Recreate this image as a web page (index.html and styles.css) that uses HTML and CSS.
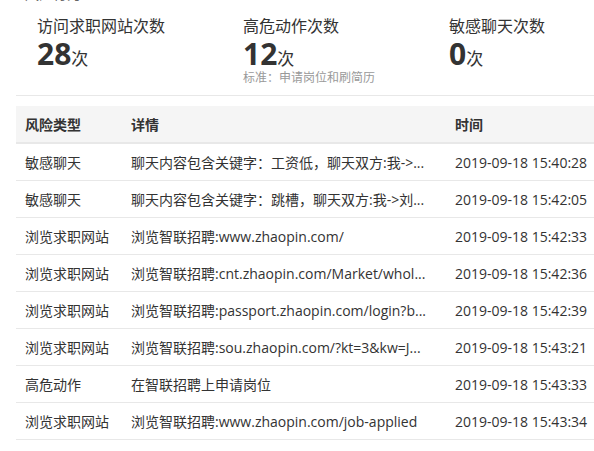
FILE: index.html
```html
<!DOCTYPE html>
<html lang="zh-CN">
<head>
<meta charset="utf-8">
<title>风险行为</title>
<link rel="stylesheet" href="styles.css">
</head>
<body>
<div class="page">
  <h2 class="section-title">风险行为</h2>
  <div class="stats">
    <div class="stat">
      <div class="stat-label">访问求职网站次数</div>
      <div class="stat-value"><span class="num">28</span><span class="unit">次</span></div>
    </div>
    <div class="stat">
      <div class="stat-label">高危动作次数</div>
      <div class="stat-value"><span class="num">12</span><span class="unit">次</span></div>
      <div class="stat-note">标准：申请岗位和刷简历</div>
    </div>
    <div class="stat stat-last">
      <div class="stat-label">敏感聊天次数</div>
      <div class="stat-value"><span class="num">0</span><span class="unit">次</span></div>
    </div>
  </div>
  <table class="risk-table">
    <colgroup>
      <col class="c-type">
      <col class="c-detail">
      <col class="c-time">
    </colgroup>
    <thead>
      <tr><th>风险类型</th><th>详情</th><th>时间</th></tr>
    </thead>
    <tbody>
      <tr><td>敏感聊天</td><td>聊天内容包含关键字：工资低，聊天双方:我-&gt;...</td><td>2019-09-18 15:40:28</td></tr>
      <tr><td>敏感聊天</td><td>聊天内容包含关键字：跳槽，聊天双方:我-&gt;刘...</td><td>2019-09-18 15:42:05</td></tr>
      <tr><td>浏览求职网站</td><td>浏览智联招聘:www.zhaopin.com/</td><td>2019-09-18 15:42:33</td></tr>
      <tr><td>浏览求职网站</td><td>浏览智联招聘:cnt.zhaopin.com/Market/whol...</td><td>2019-09-18 15:42:36</td></tr>
      <tr><td>浏览求职网站</td><td>浏览智联招聘:passport.zhaopin.com/login?b...</td><td>2019-09-18 15:42:39</td></tr>
      <tr><td>浏览求职网站</td><td>浏览智联招聘:sou.zhaopin.com/?kt=3&amp;kw=J...</td><td>2019-09-18 15:43:21</td></tr>
      <tr><td>高危动作</td><td>在智联招聘上申请岗位</td><td>2019-09-18 15:43:33</td></tr>
      <tr><td>浏览求职网站</td><td>浏览智联招聘:www.zhaopin.com/job-applied</td><td>2019-09-18 15:43:34</td></tr>
    </tbody>
  </table>
</div>
</body>
</html>
```

FILE: styles.css
```css
html, body {
  margin: 0;
  padding: 0;
  background: #fff;
}
body {
  font-family: "Open Sans", "Noto Sans CJK SC", sans-serif;
  font-size: 14px;
  color: #333;
  overflow: hidden;
}
.page {
  padding-left: 16px;
  width: 578px;
}
.section-title {
  margin: -16px 0 0 9px;
  font-size: 14px;
  font-weight: normal;
  line-height: 20px;
  color: #666;
}
.stats {
  display: flex;
  padding: 0 0 0 21px;
  border-bottom: 1px solid #e8e8e8;
  height: 81px;
  box-sizing: border-box;
  margin-top: 11px;
}
.stat {
  width: 206px;
  flex: none;
  min-width: 0;
}
.stat-last {
  flex: 1;
  width: auto;
}
.stat-label {
  font-size: 16px;
  line-height: 22px;
  color: #333;
}
.stat-value {
  line-height: 33px;
  height: 33px;
  color: #333;
}
.stat-value .num {
  font-size: 30px;
  font-weight: bold;
}
.stat-value .unit {
  font-size: 17px;
}
.stat-note {
  font-size: 12px;
  line-height: 16px;
  color: #999;
}
.risk-table {
  margin-top: 10px;
  width: 578px;
  border-collapse: collapse;
  table-layout: fixed;
}
.c-type { width: 106px; }
.c-detail { width: 324px; }
.c-time { width: 148px; }
.risk-table th,
.risk-table td {
  text-align: left;
  padding: 0 0 0 9px;
  white-space: nowrap;
  overflow: hidden;
}
.risk-table th {
  height: 36px;
  background: #f5f5f5;
  font-weight: bold;
  color: #333;
  border-bottom: 2px solid #e8e8e8;
}
.risk-table td {
  height: 36px;
  border-bottom: 1px solid #e8e8e8;
  color: #333;
}
```
